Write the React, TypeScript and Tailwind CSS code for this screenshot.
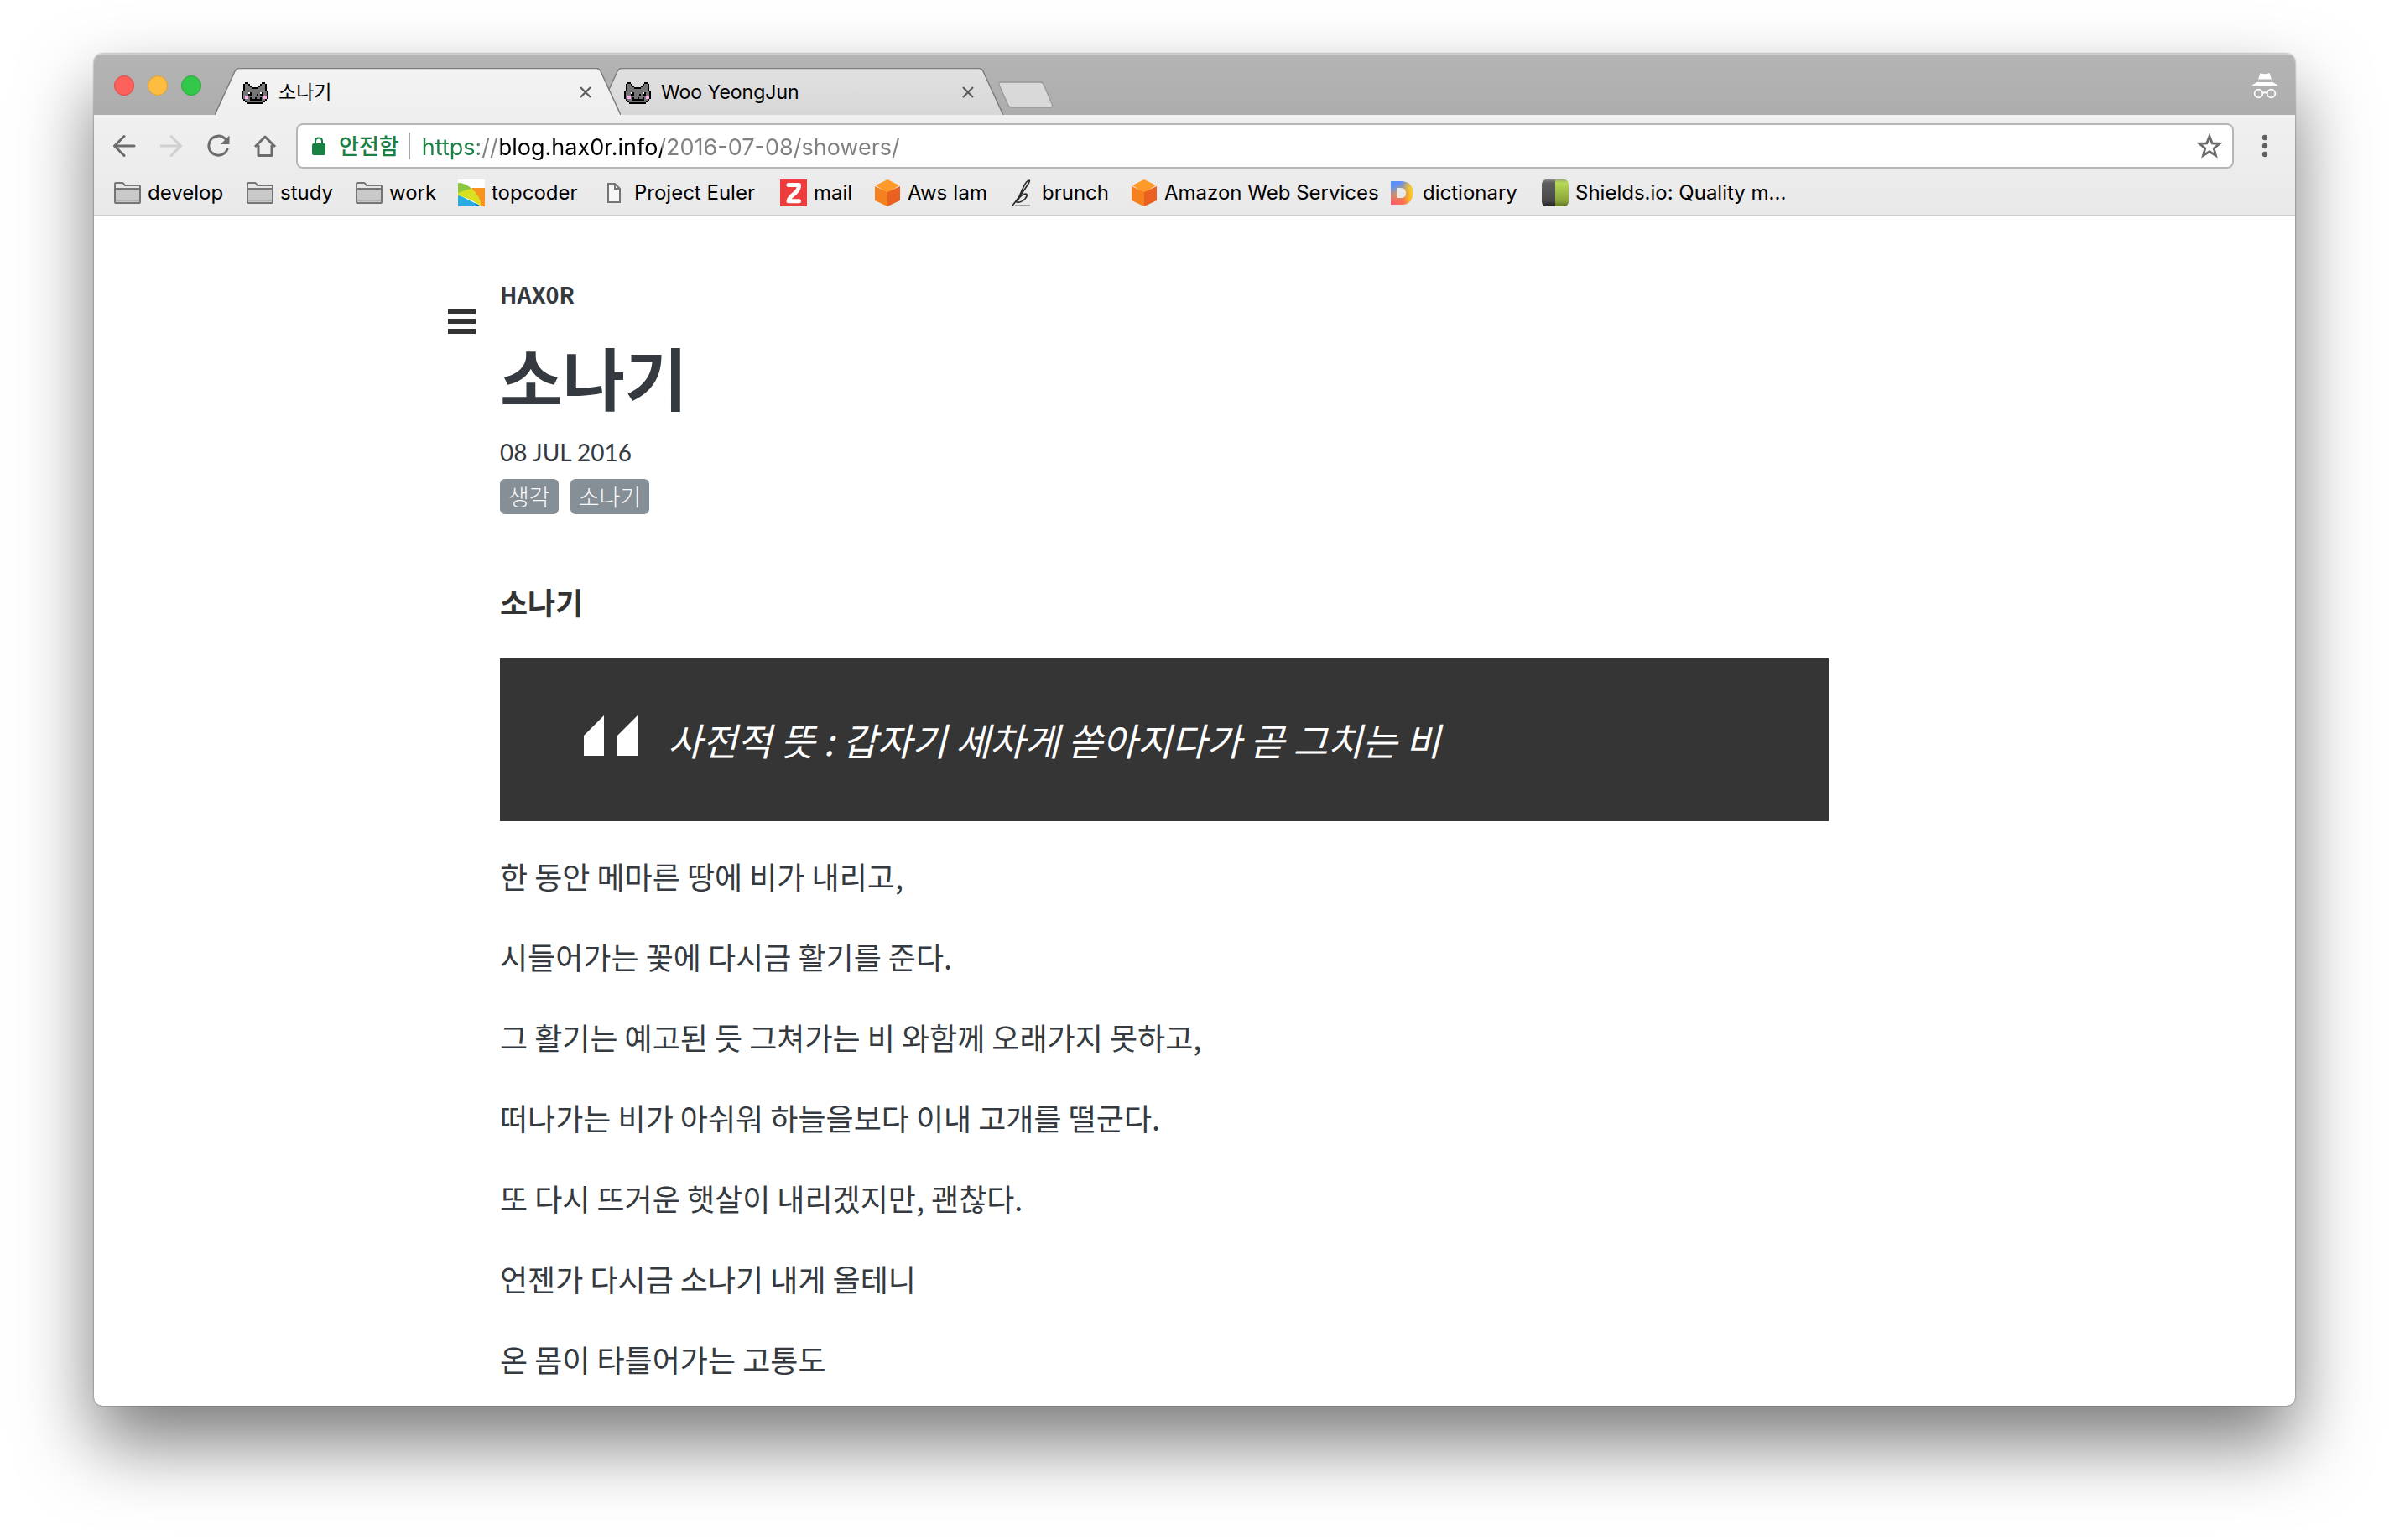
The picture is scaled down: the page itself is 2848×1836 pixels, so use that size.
import React, { useState } from "react";
import clsx from "clsx";

const CAT_ROWS = [
  "..##........##..",
  ".#gg#......#gg#.",
  ".#ggg#....#ggg#.",
  ".#gggg####gggg#.",
  ".#gggggggggggg#.",
  "#gggggggggggggg#",
  "#gggw#gggggw#gg#",
  "#ggg##ggg#g##gg#",
  "#gppgggggggggpp#",
  "#gppg#gg#gg#gpp#",
  ".#ggg#######gg#.",
  "..#gggggggggg#..",
  "...##########...",
];
const CAT_COLORS: Record<string, string> = { "#": "#000000", g: "#757575", w: "#ffffff", p: "#f9b5ea" };

function CatIcon() {
  return (
    <svg viewBox="0 -2 16 16" className="size-8 shrink-0" shapeRendering="crispEdges" aria-hidden="true">
      {CAT_ROWS.flatMap((row, y) =>
        row.split("").map((c, x) =>
          c === "." ? null : <rect key={`${x}-${y}`} x={x} y={y} width="1" height="1" fill={CAT_COLORS[c]} />,
        ),
      )}
    </svg>
  );
}

function Tab({ title, active, className }: { title: string; active?: boolean; className?: string }) {
  return (
    <div className={clsx("relative flex h-14 w-[484px] items-center pt-0.5 pr-[30px] pl-8", className)}>
      <svg viewBox="0 0 484 56" className="absolute inset-0 size-full" preserveAspectRatio="none" aria-hidden="true">
        <defs>
          <linearGradient id={active ? "tab-on" : "tab-off"} x1="0" y1="0" x2="0" y2="1">
            <stop offset="0" stopColor={active ? "#f3f3f3" : "#e1e1e1"} />
            <stop offset="1" stopColor={active ? "#efefef" : "#d7d7d7"} />
          </linearGradient>
        </defs>
        <path d="M0 56 L24 4 Q26 0.5 29 0.5 H455 Q458 0.5 460 4 L484 56 Z" fill={active ? "url(#tab-on)" : "url(#tab-off)"} />
        <path d="M0 56 L24 4 Q26 0.5 29 0.5 H455 Q458 0.5 460 4 L484 56" fill="none" stroke="#7d7d7d" strokeWidth="1.5" />
      </svg>
      <button type="button" className="relative flex flex-1 items-center gap-3 text-left text-[23px] leading-8 text-black">
        <CatIcon />
        {title}
      </button>
      <button type="button" aria-label={`Close ${title}`} className="relative flex size-6 items-center justify-center">
        <svg viewBox="0 0 14 14" className="size-3.5" aria-hidden="true">
          <path d="M1 1 L13 13 M13 1 L1 13" stroke="#5a5a5a" strokeWidth="2.2" />
        </svg>
      </button>
    </div>
  );
}

function FolderIcon() {
  return (
    <svg viewBox="0 0 32 32" className="size-8" aria-hidden="true">
      <path d="M1 27 V5 Q1 4 2 4 H10 Q11 4 11.5 5 L13 7 H30 Q31 7 31 8 V27 Q31 28 30 28 H2 Q1 28 1 27 Z" fill="#e6e6e6" stroke="#757575" strokeWidth="2" />
      <path d="M2 12 H30 V27 H2 Z" fill="#c9c9c9" />
      <path d="M2 25 H30" stroke="#b3b3b3" strokeWidth="2" />
      <path d="M1 11 H31" stroke="#757575" strokeWidth="2" />
      <path d="M1 28 H31" stroke="#757575" strokeWidth="2" />
    </svg>
  );
}

function TopcoderIcon() {
  return (
    <svg viewBox="0 0 32 32" className="size-8" aria-hidden="true">
      <rect width="32" height="32" fill="#ffffff" />
      <path d="M16 10 H32 V32 H28 Z" fill="#f7931e" />
      <path d="M0 4 Q10 4 17 12 L0 18 Z" fill="#8cc63f" />
      <path d="M0 18 L28 32 H0 Z" fill="#29abe2" />
      <path d="M20 28 L28 32 H22 Z" fill="#0b6fb8" />
      <path d="M0 16 Q10 12 16 11 Q26 18 28 32 Q14 22 0 19 Z" fill="#d9e021" />
    </svg>
  );
}

function PageIcon() {
  return (
    <svg viewBox="0 0 32 32" className="size-8" aria-hidden="true">
      <path d="M9 5 H17 L23 11 V27 H9 Z" fill="#f7f7f7" stroke="#757575" strokeWidth="2" />
      <path d="M17 5 V11 H23" fill="none" stroke="#757575" strokeWidth="2" />
    </svg>
  );
}

function ZIcon() {
  return (
    <svg viewBox="0 0 32 32" className="size-8" aria-hidden="true">
      <rect width="32" height="32" fill="#ee3b3b" />
      <path d="M10 6.5 H22.5 Q23 11 18 16 Q10 22 10 25.8 H22.5" fill="none" stroke="#ffffff" strokeWidth="5" strokeLinecap="round" strokeLinejoin="round" />
    </svg>
  );
}

function CubeIcon() {
  return (
    <svg viewBox="0 0 32 32" className="size-8" aria-hidden="true">
      <path d="M16 0 L30 7 L16 16 L2 7 Z" fill="#ff9a28" />
      <path d="M1 8 L16 15 V32 L1 25 Z" fill="#f58020" />
      <path d="M31 8 L16 15 V32 L31 25 Z" fill="#ea6020" />
    </svg>
  );
}

function BrunchIcon() {
  return (
    <svg viewBox="0 0 32 32" className="size-8" aria-hidden="true">
      <path d="M5 31 Q14 20 24 5 Q26 1 25 1 Q22 1 18 9 Q14 18 11 25 Q16 17 21 17 Q24 18 20 23 Q15 28 10 27" fill="none" stroke="#2b2b2b" strokeWidth="1.7" strokeLinejoin="round" strokeLinecap="round" />
      <path d="M8 31 H26" stroke="#8a8a8a" strokeWidth="1.5" />
    </svg>
  );
}

function DictionaryIcon() {
  return (
    <svg viewBox="0 0 32 32" className="size-8" aria-hidden="true">
      <defs>
        <linearGradient id="dict" x1="0" y1="0" x2="0.5" y2="1">
          <stop offset="0.2" stopColor="#5b8ff9" />
          <stop offset="0.55" stopColor="#c2a06a" />
          <stop offset="0.95" stopColor="#ff7a3d" />
        </linearGradient>
        <linearGradient id="dict-right" x1="0" y1="0" x2="1" y2="0">
          <stop offset="0.55" stopColor="#ffd21f" stopOpacity="0" />
          <stop offset="1" stopColor="#ffd21f" />
        </linearGradient>
        <linearGradient id="dict-bottom" x1="0.3" y1="0.5" x2="0" y2="1">
          <stop offset="0" stopColor="#ff5470" stopOpacity="0" />
          <stop offset="1" stopColor="#ff5470" />
        </linearGradient>
      </defs>
      {["url(#dict)", "url(#dict-right)", "url(#dict-bottom)"].map((fill) => (
        <path key={fill} d="M2 2 H14 Q28 2 28 16 Q28 30 14 30 H2 Z M10 10 V22 H14 Q20 22 20 16 Q20 10 14 10 Z" fill={fill} fillRule="evenodd" />
      ))}
    </svg>
  );
}

function ShieldsIcon() {
  return (
    <svg viewBox="0 0 32 32" className="size-8" aria-hidden="true">
      <defs>
        <linearGradient id="sh-dark" x1="0" y1="0" x2="0" y2="1">
          <stop offset="0" stopColor="#8a8a8a" />
          <stop offset="0.12" stopColor="#5f5f5f" />
          <stop offset="0.8" stopColor="#474747" />
          <stop offset="1" stopColor="#1f1f1f" />
        </linearGradient>
        <linearGradient id="sh-green" x1="0" y1="0" x2="0" y2="1">
          <stop offset="0" stopColor="#9aa873" />
          <stop offset="0.12" stopColor="#b7d957" />
          <stop offset="0.8" stopColor="#8aa33a" />
          <stop offset="1" stopColor="#5f7420" />
        </linearGradient>
      </defs>
      <path d="M4 0 H16 V32 H4 Q0 30 0 26 V6 Q0 2 4 0 Z" fill="url(#sh-dark)" />
      <path d="M28 0 H16 V32 H28 Q32 30 32 26 V6 Q32 2 28 0 Z" fill="url(#sh-green)" />
    </svg>
  );
}

const BOOKMARKS = [
  { label: "develop", Icon: FolderIcon, width: "w-[158px]" },
  { label: "study", Icon: FolderIcon, width: "w-[130px]" },
  { label: "work", Icon: FolderIcon, width: "w-[122px]" },
  { label: "topcoder", Icon: TopcoderIcon, width: "w-[170px]" },
  { label: "Project Euler", Icon: PageIcon, width: "w-[214px]" },
  { label: "mail", Icon: ZIcon, width: "w-[112px]" },
  { label: "Aws Iam", Icon: CubeIcon, width: "w-[160px]" },
  { label: "brunch", Icon: BrunchIcon, width: "w-[146px]" },
  { label: "Amazon Web Services", Icon: CubeIcon, width: "w-[308px]" },
  { label: "dictionary", Icon: DictionaryIcon, width: "w-[182px]" },
  { label: "Shields.io: Quality m...", Icon: ShieldsIcon, width: "w-[320px]" },
];

function Toolbar() {
  const [url, setUrl] = useState("https://blog.hax0r.info/2016-07-08/showers/");
  return (
    <div className="flex items-center pt-2.5 pr-6 pl-[23px]">
      <div className="flex gap-6">
        <button type="button" aria-label="Back" className="size-8">
          <svg viewBox="0 0 32 32" fill="none" stroke="#6b6b6b" strokeWidth="3" strokeLinecap="round" aria-hidden="true">
            <path d="M25 16 H1.5 M13 4.5 L1.5 16 L13 27.5" />
          </svg>
        </button>
        <button type="button" aria-label="Forward" disabled className="size-8">
          <svg viewBox="0 0 32 32" fill="none" stroke="#d0d0d0" strokeWidth="3" strokeLinecap="round" aria-hidden="true">
            <path d="M1 16 H24.5 M13 4.5 L24.5 16 L13 27.5" />
          </svg>
        </button>
        <button type="button" aria-label="Reload" className="size-8">
          <svg viewBox="0 0 32 32" fill="none" aria-hidden="true">
            <path d="M21.5 7.5 A11.5 11.5 0 1 0 24 20" stroke="#6b6b6b" strokeWidth="3" strokeLinecap="round" />
            <path d="M26.5 3.5 V14 H16 Z" fill="#6b6b6b" />
          </svg>
        </button>
        <button type="button" aria-label="Home" className="size-8">
          <svg viewBox="0 0 32 32" fill="none" stroke="#6b6b6b" strokeWidth="3" aria-hidden="true">
            <path d="M1 17 L13 5 L25 17 M5 15 V27.5 H21 V15" strokeLinejoin="round" />
          </svg>
        </button>
      </div>
      <div className="ml-[18px] flex h-[54px] flex-1 items-center rounded-lg border-2 border-[#b6b6b6] bg-white">
        <svg viewBox="0 0 16 22" className="ml-[17px] h-[22px] w-4" aria-hidden="true">
          <rect y="8" width="16" height="14" rx="2" fill="#188043" />
          <path d="M4 9 V5.5 Q4 1.5 8 1.5 Q12 1.5 12 5.5 V9" fill="none" stroke="#188043" strokeWidth="2.2" />
        </svg>
        <span className="ml-4 pt-0.5 text-[26px] leading-8 font-medium text-[#188043]">안전함</span>
        <span className="ml-3 h-8 w-px bg-[#a8a8a8]" />
        <input
          aria-label="Address"
          value={url}
          onChange={(e) => setUrl(e.target.value)}
          className="ml-3.5 h-12 flex-1 bg-[linear-gradient(90deg,#188043_0_67px,#808080_67px_94px,#000000_94px_286px,#808080_286px)] bg-clip-text pt-0.5 text-[27px] text-transparent caret-black outline-none"
        />
        <button type="button" aria-label="Bookmark this page" className="mr-[11px] size-8">
          <svg viewBox="0 0 32 32" fill="none" aria-hidden="true">
            <path d="M16 4.5 L19.2 12.8 L28 13.3 L21.2 18.9 L23.5 27.5 L16 22.7 L8.5 27.5 L10.8 18.9 L4 13.3 L12.8 12.8 Z" stroke="#6b6b6b" strokeWidth="2.8" />
          </svg>
        </button>
      </div>
      <button type="button" aria-label="Menu" className="ml-[25px] h-8 w-6">
        <svg viewBox="0 0 24 32" fill="#5f5f5f" aria-hidden="true">
          <circle cx="12" cy="6" r="3.2" />
          <circle cx="12" cy="16" r="3.2" />
          <circle cx="12" cy="26" r="3.2" />
        </svg>
      </button>
    </div>
  );
}

const LINES = [
  "한 동안 메마른 땅에 비가 내리고,",
  "시들어가는 꽃에 다시금 활기를 준다.",
  "그 활기는 예고된 듯 그쳐가는 비 와함께 오래가지 못하고,",
  "떠나가는 비가 아쉬워 하늘을보다 이내 고개를 떨군다.",
  "또 다시 뜨거운 햇살이 내리겠지만, 괜찮다.",
  "언젠가 다시금 소나기 내게 올테니",
  "온 몸이 타틀어가는 고통도",
];

export default function App() {
  return (
    <div className="bg-white px-28 pt-16 pb-40">
      <div className="overflow-hidden rounded-[10px] bg-white shadow-[0_0_2px_rgba(0,0,0,0.6),0_44px_88px_rgba(0,0,0,0.52)]">
        <header className="font-['Inter','Noto_Sans_CJK_KR',sans-serif]">
          <div className="flex h-[73px] items-end border-t-2 border-[#cfcfcf] bg-linear-to-b from-[#b4b4b4] to-[#adadad]">
            <div className="mb-[23px] flex gap-4 pl-6">
              <button type="button" aria-label="Close" className="size-6 rounded-full border border-[#e2463f] bg-[#fc615c]" />
              <button type="button" aria-label="Minimize" className="size-6 rounded-full border border-[#dfa033] bg-[#fdbd41]" />
              <button type="button" aria-label="Zoom" className="size-6 rounded-full border border-[#27aa35] bg-[#34c84a]" />
            </div>
            <Tab title="소나기" active className="z-10 ml-4" />
            <Tab title="Woo YeongJun" className="-ml-7" />
            <button type="button" aria-label="New tab" className="mb-2 -ml-1.5 h-8 w-[66px]">
              <svg viewBox="0 0 66 32" aria-hidden="true">
                <path d="M3 1 H50 Q53 1 54 3.500 L64.500 28 Q65 31 62 31 H16 Q13 31 12 28.500 L1 4 Q0.500 1 3 1 Z" fill="#d9d9d9" stroke="#989898" strokeWidth="1.300" />
              </svg>
            </button>
            <svg viewBox="0 0 34 32" className="mr-[19px] mb-[19px] ml-auto h-8 w-[34px]" fill="#ffffff" aria-hidden="true">
              <path d="M11.500 1 Q17 3.500 22.500 1 L25 8.500 H9 Z" />
              <path d="M7.500 12 H26.500 L33 16 H1 Z" />
              <g fill="none" stroke="#ffffff" strokeWidth="1.800">
                <circle cx="9.500" cy="25.500" r="4.800" />
                <circle cx="24.500" cy="25.500" r="4.800" />
                <path d="M14 25 Q17 23.500 20 25" />
              </g>
            </svg>
          </div>
          <div className="h-[121px] border-b-2 border-[#cdcdcd] bg-linear-to-b from-[#f0f0f0] to-[#e9e9e9]">
            <Toolbar />
            <nav aria-label="Bookmarks" className="flex pt-3 pl-6">
              {BOOKMARKS.map(({ label, Icon, width }) => (
                <a key={label} href="#" className={clsx("flex shrink-0 items-center gap-2 text-[24px] leading-8 whitespace-nowrap text-black", width)}>
                  <Icon />
                  <span className="pt-px">{label}</span>
                </a>
              ))}
            </nav>
          </div>
        </header>

        <main className="mx-auto flex max-w-[1800px] items-start pt-[65px] pr-36 pb-7 font-['Noto_Sans_CJK_KR',sans-serif] text-[#343a40]">
          <div className="w-[72px] shrink-0 pt-[45px] pl-[10px]">
            <button type="button" aria-label="Toggle menu" className="flex w-[33px] flex-col gap-1.5">
              <span className="h-1.5 w-full bg-[#333333]" />
              <span className="h-1.5 w-full bg-[#333333]" />
              <span className="h-1.5 w-full bg-[#333333]" />
            </button>
          </div>
          <article className="min-w-0 flex-1">
            <a href="#" className="block text-[27px] leading-[56px] font-bold">HAX0R</a>
            <h1 className="text-[81px] leading-[138px] font-bold">소나기</h1>
            <time dateTime="2016-07-08" className="block font-['Lato',sans-serif] text-[28px] leading-[44px]">08 JUL 2016</time>
            <ul className="mt-2.5 flex gap-3.5 text-[27px] leading-[42px] font-light text-[#f8f9fa]">
              <li>
                <a href="#" className="block rounded-md bg-[#868e96] px-[10px]">생각</a>
              </li>
              <li>
                <a href="#" className="block rounded-md bg-[#868e96] px-[10px]">소나기</a>
              </li>
            </ul>
            <h2 className="mt-[77px] text-[36px] leading-[54px] font-bold text-[#333333]">소나기</h2>
            <blockquote className="mt-[41px] flex h-[194px] items-center gap-9 bg-[#353535] px-25 text-[45px] leading-[68px] text-white italic">
              <svg viewBox="0 0 64 48" className="mb-2.5 h-12 w-16" fill="#ffffff" aria-hidden="true">
                <path d="M0 24 L24 0 V48 H0 Z" />
                <path d="M40 24 L64 0 V48 H40 Z" />
              </svg>
              <p>사전적 뜻 : 갑자기 세차게 쏟아지다가 곧 그치는 비</p>
            </blockquote>
            <div className="mt-[37px] flex flex-col gap-10 text-[36px] leading-[56px]">
              {LINES.map((line) => (
                <p key={line}>{line}</p>
              ))}
            </div>
          </article>
        </main>
      </div>
    </div>
  );
}
